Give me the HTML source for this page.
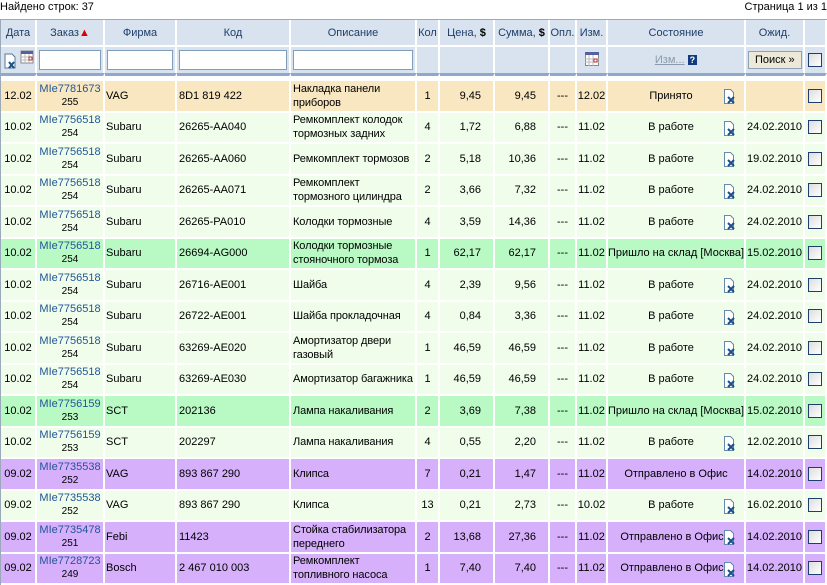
<!DOCTYPE html>
<html><head><meta charset="utf-8"><style>
body{margin:0;width:827px;height:584px;overflow:hidden;background:#fff;font-family:"Liberation Sans",Arial,sans-serif;font-size:11px;color:#000;position:relative}
.top{position:absolute;top:1px;left:0;right:0;height:16px}
.top .l{position:absolute;left:0;top:0}
.top .r{position:absolute;right:0;top:0}
table{position:absolute;top:19px;left:0;border-collapse:separate;border-spacing:0;table-layout:fixed;width:827px;border-top:1px solid #9aaabb;border-left:1px solid #9aaabb}
td{border-right:2px solid #fff;border-bottom:2px solid #fff;padding:0 2px;white-space:nowrap;overflow:hidden;vertical-align:middle;position:relative}
tr.h td{background:#d8e3ef;color:#1f3d6a;text-align:center;height:25px}
tr.f td{background:#d8e3ef;height:26px;border-bottom:0}
tr.s td{height:3px;padding:0;background:#fff;border-bottom:2px solid #fff;border-top:3px solid #8fa8cc}
tr.d td{height:29.5px}
.dv{height:28px;display:flex;align-items:center;white-space:normal;line-height:14px;overflow:hidden;letter-spacing:-0.1px}
.o td{background:#f8e7c0}.g td{background:#effdea}.m td{background:#b9f9c4}.p td{background:#d6b0fb}
.c{text-align:center}.r{text-align:right}
.z{color:#225599;text-align:center;line-height:13px;padding:0}
.z b{font-weight:normal;color:#000;font-size:10px;display:block}
input.t{width:100%;box-sizing:border-box;height:20px;border:1px solid #7f9db9;margin:0}
.cb{display:inline-block;width:12px;height:12px;border:1px solid #1c3f6e;background:linear-gradient(135deg,#ddd,#fff);vertical-align:middle}
.ic{position:absolute;right:8px;top:8px}
.btn{display:inline-block;border:1px solid #8fa1b5;background:#ece9d8;padding:1px 6px;height:14px;line-height:14px}
</style></head><body>
<div class="top"><span class="l">Найдено строк: 37</span><span class="r">Страница 1 из 1</span></div>
<table>
<colgroup><col style="width:36px"><col style="width:68px"><col style="width:72px"><col style="width:114px"><col style="width:126px"><col style="width:23px"><col style="width:55px"><col style="width:55px"><col style="width:27px"><col style="width:31px"><col style="width:138px"><col style="width:59px"><col style="width:22px"></colgroup>
<tr class="h"><td>Дата</td><td>Заказ<span style="color:#d00">▲</span></td><td>Фирма</td><td>Код</td><td>Описание</td><td style="padding:0">Кол</td><td>Цена, <b style="color:#000">$</b></td><td>Сумма, <b style="color:#000">$</b></td><td style="padding:0">Опл.</td><td style="padding:0">Изм.</td><td>Состояние</td><td>Ожид.</td><td></td></tr>
<tr class="f"><td style="padding:0 0 0 1px"><svg width="34" height="22" viewBox="0 0 34 22"><path d="M3 6h7l3 3v11H3z" fill="#fff" stroke="#557799"/><path d="M7 14l5 6M12 14l-5 6" stroke="#1a4f8a" stroke-width="2"/><rect x="19" y="3" width="12" height="12" fill="#fff" stroke="#888"/><rect x="19" y="3" width="12" height="3" fill="#5560a0"/><path d="M19 9h12M19 12h12M23 6v9M27 6v9" stroke="#bbb"/><rect x="27" y="9" width="3" height="3" fill="none" stroke="#b03030"/></svg></td><td><input class="t"></td><td><input class="t"></td><td><input class="t"></td><td><input class="t"></td><td></td><td></td><td></td><td></td><td class="c"><svg width="14" height="14"><rect x="0.5" y="0.5" width="13" height="13" fill="#fff" stroke="#888"/><rect x="0" y="0" width="14" height="3" fill="#5560a0"/><path d="M0 7h14M0 10h14M4 3v11M8 3v11" stroke="#bbb"/><rect x="9" y="7" width="3" height="3" fill="none" stroke="#b03030"/></svg></td><td class="c"><span style="color:#8a9aaa;text-decoration:underline">Изм...</span> <span style="background:#123a80;color:#fff;font-weight:bold;font-size:9px;padding:0 2px">?</span></td><td class="c"><span class="btn">Поиск »</span></td><td class="c"><span class="cb"></span></td></tr>
<tr class="s"><td></td><td></td><td></td><td></td><td></td><td></td><td></td><td></td><td></td><td></td><td></td><td></td><td></td></tr>
</table>
<script>
var ic='<svg class="ic" width="12" height="15" viewBox="0 0 12 15"><path d="M0.5 0.5h6l3 3v11h-9z" fill="#fff" stroke="#6688aa"/><path d="M4 8l6 6M10 8l-6 6" stroke="#1a4f8a" stroke-width="2"/></svg>';
var R=[
['o','12.02','MIe7781673','255','VAG','8D1 819 422','Накладка панели приборов','1','9,45','9,45','12.02','Принято',1,''],
['g','10.02','MIe7756518','254','Subaru','26265-AA040','Ремкомплект колодок тормозных задних','4','1,72','6,88','11.02','В работе',1,'24.02.2010'],
['g','10.02','MIe7756518','254','Subaru','26265-AA060','Ремкомплект тормозов','2','5,18','10,36','11.02','В работе',1,'19.02.2010'],
['g','10.02','MIe7756518','254','Subaru','26265-AA071','Ремкомплект тормозного цилиндра','2','3,66','7,32','11.02','В работе',1,'24.02.2010'],
['g','10.02','MIe7756518','254','Subaru','26265-PA010','Колодки тормозные','4','3,59','14,36','11.02','В работе',1,'24.02.2010'],
['m','10.02','MIe7756518','254','Subaru','26694-AG000','Колодки тормозные стояночного тормоза','1','62,17','62,17','11.02','Пришло на склад [Москва]',0,'15.02.2010'],
['g','10.02','MIe7756518','254','Subaru','26716-AE001','Шайба','4','2,39','9,56','11.02','В работе',1,'24.02.2010'],
['g','10.02','MIe7756518','254','Subaru','26722-AE001','Шайба прокладочная','4','0,84','3,36','11.02','В работе',1,'24.02.2010'],
['g','10.02','MIe7756518','254','Subaru','63269-AE020','Амортизатор двери газовый','1','46,59','46,59','11.02','В работе',1,'24.02.2010'],
['g','10.02','MIe7756518','254','Subaru','63269-AE030','Амортизатор&nbsp;багажника','1','46,59','46,59','11.02','В работе',1,'24.02.2010'],
['m','10.02','MIe7756159','253','SCT','202136','Лампа накаливания','2','3,69','7,38','11.02','Пришло на склад [Москва]',0,'15.02.2010'],
['g','10.02','MIe7756159','253','SCT','202297','Лампа накаливания','4','0,55','2,20','11.02','В работе',1,'12.02.2010'],
['p','09.02','MIe7735538','252','VAG','893 867 290','Клипса','7','0,21','1,47','11.02','Отправлено в Офис',0,'14.02.2010'],
['g','09.02','MIe7735538','252','VAG','893 867 290','Клипса','13','0,21','2,73','10.02','В работе',1,'16.02.2010'],
['p','09.02','MIe7735478','251','Febi','11423','Стойка стабилизатора переднего','2','13,68','27,36','11.02','Отправлено в Офис',2,'14.02.2010'],
['p','09.02','MIe7728723','249','Bosch','2 467 010 003','Ремкомплект топливного насоса','1','7,40','7,40','11.02','Отправлено в Офис',2,'14.02.2010']];
var t=document.querySelector('table tbody')||document.querySelector('table');
R.forEach(function(r){var tr=document.createElement('tr');tr.className='d '+r[0];
var st=r[12]==1?'<span style="display:block;text-align:center;padding-right:10px">'+r[11]+'</span>'+ic:'<span style="display:block;text-align:center;margin:0 -2px;'+(r[12]==2?'padding-right:8px':'')+'">'+r[11]+'</span>'+(r[12]==2?ic:'');
tr.innerHTML='<td class="c" style="padding:0">'+r[1]+'</td><td class="z">'+r[2]+'<b>'+r[3]+'</b></td><td style="padding:0 1px">'+r[4]+'</td><td>'+r[5]+'</td><td style="padding:0 0 0 2px"><div class="dv">'+r[6]+'</div></td><td class="c" style="padding:0">'+r[7]+'</td><td class="r" style="padding-right:12px">'+r[8]+'</td><td class="r" style="padding-right:12px">'+r[9]+'</td><td class="c" style="padding:0">---</td><td class="c" style="padding:0">'+r[10]+'</td><td style="padding:0">'+st+'</td><td class="c" style="padding:0">'+r[13]+'</td><td class="c" style="padding:0"><span class="cb"></span></td>';
t.appendChild(tr);});
</script>
</body></html>
